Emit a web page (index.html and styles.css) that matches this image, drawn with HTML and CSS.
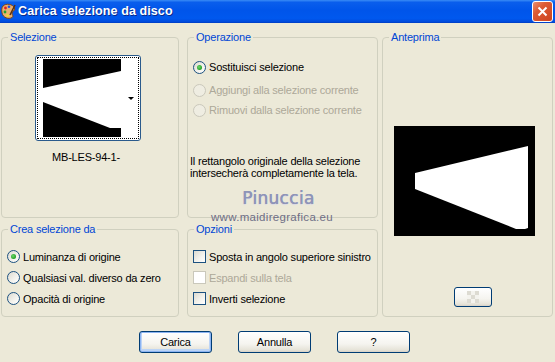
FILE: index.html
```html
<!DOCTYPE html>
<html lang="it">
<head>
    <meta charset="UTF-8">
    <title>Carica selezione da disco</title>
    <link rel="stylesheet" href="styles.css">
</head>
<body>
    <div class="window">
        <div class="titlebar">
            <svg class="app-icon" width="15" height="16" viewBox="0 0 15 16">
                <path d="M2 3 C5 0 12 1 13.5 5 C14.5 8 11 8 11 10 C11 12.5 13 13 11 14.5 C8 16.5 2 15 1 10 C0.5 7 0.5 5 2 3 Z" fill="#E8B070" stroke="#7A4318" stroke-width="1"/>
                <circle cx="4.5" cy="5" r="1.4" fill="#E02020"/>
                <circle cx="8" cy="3.8" r="1.3" fill="#2050E0"/>
                <circle cx="4" cy="9" r="1.4" fill="#20A030"/>
                <circle cx="6.5" cy="12.5" r="1.3" fill="#F0E020"/>
                <path d="M9 12 L14 2" stroke="#5A3010" stroke-width="1.6"/>
            </svg>
            <span class="title">Carica selezione da disco</span>
            <div class="close">
                <svg width="11" height="11" viewBox="0 0 11 11">
                    <path d="M1.5 1.5 L9.5 9.5 M9.5 1.5 L1.5 9.5" stroke="#fff" stroke-width="2"/>
                </svg>
            </div>
        </div>

        <div class="client">
            <div class="groups">
                <fieldset class="group g-sel">
                    <legend>Selezione</legend>
                    <div class="thumb">
                        <div class="focus">
                            <svg width="78" height="78" viewBox="0 0 78 78">
                                <rect width="78" height="78" fill="#000"/>
                                <polygon points="0,29 78,12 78,69 67,69 0,43" fill="#fff"/>
                            </svg>
                            <span class="drop"></span>
                        </div>
                    </div>
                    <div class="thumb-name">MB-LES-94-1-</div>
                </fieldset>

                <fieldset class="group g-op">
                    <legend>Operazione</legend>
                    <div class="opts">
                        <div class="row first"><span class="radio on"></span>Sostituisci selezione</div>
                        <div class="row second disabled"><span class="radio"></span>Aggiungi alla selezione corrente</div>
                        <div class="row disabled"><span class="radio"></span>Rimuovi dalla selezione corrente</div>
                    </div>
                    <p class="info">Il rettangolo originale della selezione<br>intersecherà completamente la tela.</p>
                </fieldset>

                <fieldset class="group g-prev">
                    <legend>Anteprima</legend>
                    <svg class="canvas" width="141" height="110" viewBox="0 0 141 110">
                        <rect width="141" height="110" fill="#000"/>
                        <polygon points="21,47 134,20 134,102 131,103 122,103 21,63" fill="#fff"/>
                    </svg>
                    <div class="btn small">
                        <svg width="12" height="12" viewBox="0 0 12 12">
                            <rect width="12" height="12" fill="#F4F3EE"/>
                            <rect x="0" y="0" width="4" height="4" fill="#DDDBD2"/>
                            <rect x="8" y="0" width="4" height="4" fill="#DDDBD2"/>
                            <rect x="4" y="4" width="4" height="4" fill="#DDDBD2"/>
                            <rect x="0" y="8" width="4" height="4" fill="#DDDBD2"/>
                            <rect x="8" y="8" width="4" height="4" fill="#DDDBD2"/>
                        </svg>
                    </div>
                </fieldset>

                <fieldset class="group g-crea">
                    <legend>Crea selezione da</legend>
                    <div class="opts list">
                        <div class="row"><span class="radio on"></span>Luminanza di origine</div>
                        <div class="row"><span class="radio"></span>Qualsiasi val. diverso da zero</div>
                        <div class="row"><span class="radio"></span>Opacità di origine</div>
                    </div>
                </fieldset>

                <fieldset class="group g-opz">
                    <legend>Opzioni</legend>
                    <div class="opts list">
                        <div class="row"><span class="check"></span>Sposta in angolo superiore sinistro</div>
                        <div class="row disabled"><span class="check"></span>Espandi sulla tela</div>
                        <div class="row"><span class="check"></span>Inverti selezione</div>
                    </div>
                </fieldset>
            </div>

            <div class="buttons">
                <div class="btn default">Carica</div>
                <div class="btn">Annulla</div>
                <div class="btn">?</div>
            </div>
        </div>

        <!-- watermark over the dialog -->
        <div class="mark">Pinuccia</div>
        <div class="mark-url">www.maidiregrafica.eu</div>
    </div>
</body>
</html>
```

FILE: styles.css
```css
* {
    box-sizing: border-box;
}

body {
    margin: 0;
    width: 555px;
    height: 362px;
    overflow: hidden;
    background: #ECE9D8;
    font-family: "Liberation Sans", Arial, sans-serif;
    font-size: 11px;
    letter-spacing: -0.2px;
    color: #000;
}

.window {
    position: relative;
    height: 362px;
}

/* title bar */
.titlebar {
    height: 23px;
    display: flex;
    align-items: center;
    padding: 0 2px 1px 1px;
    background: linear-gradient(#3A8CF6 0%, #0A5EEC 10%, #0055EA 45%, #0058EE 80%, #004BDC 94%, #003CC0 100%);
}

.app-icon {
    flex: none;
}

.title {
    margin-left: 2px;
    color: #fff;
    font-weight: bold;
    font-size: 12.5px;
    letter-spacing: 0.1px;
    text-shadow: 1px 1px 0 #0A2A8A;
}

.close {
    margin-left: auto;
    width: 21px;
    height: 21px;
    border: 1px solid #fff;
    border-radius: 3px;
    display: flex;
    align-items: center;
    justify-content: center;
    background: linear-gradient(135deg, #EA9070 0%, #DE5B33 35%, #CC4420 100%);
}

/* group boxes */
.client {
    padding: 8px 0 0 1px;
}

.groups {
    display: grid;
    grid-template-columns: 178px 191px 167px;
    grid-template-rows: 187px 94px;
    column-gap: 8px;
    row-gap: 5px;
}

.group {
    margin: 0;
    padding: 0;
    min-width: 0;
    border: 1px solid #D0D0BF;
    border-radius: 4px;
}

.group legend {
    margin-left: 6px;
    padding: 0 2px;
    line-height: 13px;
    color: #0046D5;
}

.g-sel { grid-column: 1; grid-row: 1; }
.g-op { grid-column: 2; grid-row: 1; }
.g-prev { grid-column: 3; grid-row: 1 / span 2; margin-left: -4px; }
.g-crea { grid-column: 1; grid-row: 2; }
.g-opz { grid-column: 2; grid-row: 2; }

/* thumbnail */
.thumb {
    margin: 11px 0 0 33px;
    width: 106px;
    height: 86px;
    border: 1px solid #2A5A8C;
    border-radius: 3px;
    padding: 1px;
    background: #fff;
}

.focus {
    height: 100%;
    border: 1px dotted #000;
    display: flex;
    align-items: center;
    padding-left: 5px;
}

.drop {
    margin-left: 7px;
    width: 0;
    height: 0;
    border-left: 3px solid transparent;
    border-right: 3px solid transparent;
    border-top: 3px solid #000;
}

.thumb-name {
    margin: 10px 0 0 33px;
    width: 102px;
    text-align: center;
    line-height: 13px;
}

/* radio / checkbox rows */
.opts {
    padding-left: 5px;
}

.row {
    height: 20px;
    display: flex;
    align-items: center;
    white-space: nowrap;
}

.g-op .first { margin-top: 13px; }
.g-op .second { margin-top: 3px; }

.list {
    margin-top: 10px;
}

.list .row {
    height: 21px;
}

.radio {
    flex: none;
    width: 13px;
    height: 13px;
    margin-right: 3px;
    border: 1px solid #1C5180;
    border-radius: 50%;
    background: linear-gradient(135deg, #DCDAD0 0%, #F4F3EE 60%, #fff 100%);
    display: flex;
    align-items: center;
    justify-content: center;
}

.radio.on::after {
    content: "";
    width: 5px;
    height: 5px;
    border-radius: 50%;
    background: radial-gradient(circle at 40% 40%, #6FD66F 0%, #21A121 70%);
}

.check {
    flex: none;
    width: 13px;
    height: 13px;
    margin-right: 3px;
    border: 1px solid #1C5180;
    background: linear-gradient(135deg, #DCDAD0 0%, #F4F3EE 60%, #fff 100%);
}

.disabled {
    color: #ACA899;
}

.disabled .radio {
    border-color: #CAC8BB;
    background: #EFEDE2;
}

.disabled .check {
    border-color: #CAC8BB;
    background: #fff;
}

.info {
    margin: 35px 0 0 2px;
    line-height: 12px;
}

/* preview */
.canvas {
    display: block;
    margin: 82px 0 0 11px;
}

/* buttons */
.btn {
    width: 73px;
    height: 22px;
    border: 1px solid #003C74;
    border-radius: 3px;
    display: flex;
    align-items: center;
    justify-content: center;
    background: linear-gradient(#FFFFFF 0%, #F5F4EF 60%, #E6E3D8 90%, #D6D0C5 100%);
}

.btn.default {
    box-shadow: inset 0 0 0 1px #8CB4F2, inset 0 -1px 0 2px #BCD4F6;
}

.btn.small {
    width: 38px;
    height: 20px;
    margin: 51px 0 0 71px;
}

.buttons {
    display: flex;
    gap: 26px;
    margin-top: 14px;
    padding-left: 138px;
}

/* watermark */
.mark {
    position: absolute;
    left: 242px;
    top: 188px;
    font-family: "DejaVu Sans", sans-serif;
    font-size: 17px;
    line-height: 20px;
    letter-spacing: 0.3px;
    color: #8E94B8;
    text-shadow: 0.5px 0 0 #8E94B8, 0 1px 1px #D8D8E6;
}

.mark-url {
    position: absolute;
    left: 211px;
    top: 210px;
    font-size: 11.5px;
    line-height: 14px;
    color: #6E6E86;
    letter-spacing: 0.3px;
}
```
